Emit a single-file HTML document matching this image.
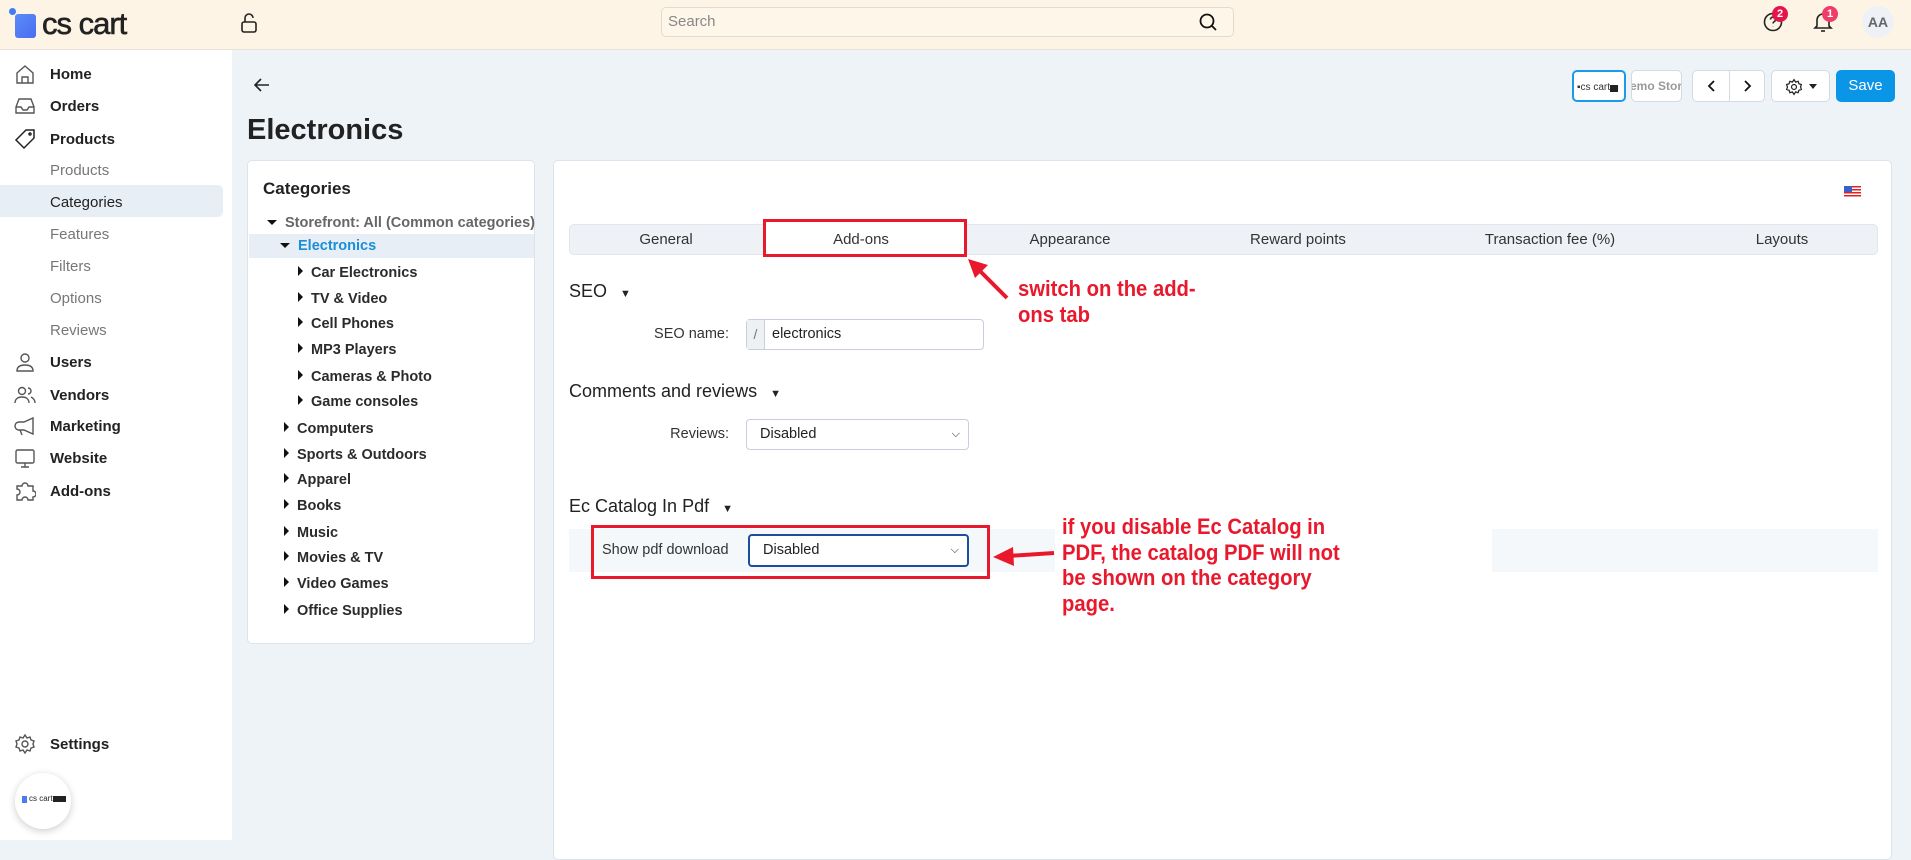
<!DOCTYPE html>
<html><head><meta charset="utf-8"><style>
*{box-sizing:border-box;margin:0;padding:0}
body{width:1911px;height:840px;overflow:hidden;background:#eef3f8;font-family:"Liberation Sans",sans-serif;color:#222;position:relative}
.a{position:absolute;white-space:nowrap}
.hdr{position:absolute;left:0;top:0;width:1911px;height:50px;background:#fef4e6;border-bottom:1px solid #e8e2d8}
.side{position:absolute;left:0;top:50px;width:232px;height:790px;background:#fff}
.nav{position:absolute;left:50px;font-size:15px;font-weight:bold;color:#222;line-height:18px;margin-top:2px}
.sub{position:absolute;left:50px;font-size:15px;color:#777;line-height:18px;margin-top:2px}
.ic{position:absolute;left:14px;width:22px;height:22px}
.panel{position:absolute;background:#fff;border:1px solid #dde3ea;border-radius:5px}
.tr{position:absolute;font-size:14.5px;font-weight:bold;color:#2b2b2b;line-height:18px}
.tri{display:inline-block;width:0;height:0;border-top:5px solid transparent;border-bottom:5px solid transparent;border-left:5px solid #111;margin-right:8px;vertical-align:1px}
.trd{display:inline-block;width:0;height:0;border-left:5px solid transparent;border-right:5px solid transparent;border-top:5px solid #111;margin-right:8px;vertical-align:2px}
.tab{position:absolute;top:224px;font-size:15px;color:#333;line-height:31px;transform:translateX(-50%)}
.h2{position:absolute;left:569px;font-size:18px;color:#222;line-height:22px}
.lbl{position:absolute;font-size:14.5px;color:#333;line-height:18px}
.sel{position:absolute;border:1px solid #ccd;border-radius:4px;background:#fff;font-size:14.5px;line-height:29px;padding-left:13px;color:#222}
.ann{position:absolute;font-weight:bold;color:#e8192c;font-size:22px;line-height:25.5px;transform:scaleX(0.92);transform-origin:left top}
.btn{position:absolute;top:70px;height:32px;background:#fff;border:1px solid #d3dae2;border-radius:5px}
</style></head><body>
<div class="hdr"></div>
<div class="a" style="left:9px;top:8px;width:7px;height:7px;border-radius:50%;background:#3f7df0"></div>
<div class="a" style="left:15px;top:14px;width:21px;height:24px;border-radius:3px;background:linear-gradient(135deg,#5a8cf8,#4a6cf0)"></div>
<div class="a" style="left:42px;top:6px;font-size:31px;color:#222;letter-spacing:-1px;line-height:36px;-webkit-text-stroke:0.6px #222">cs cart</div>
<svg class="a" style="left:239px;top:12px" width="20" height="22" viewBox="0 0 20 22" fill="none" stroke="#222" stroke-width="1.6"><rect x="3" y="10" width="14" height="10" rx="2"/><path d="M6 10V6a4 4 0 0 1 8 0"/></svg>
<div class="a" style="left:661px;top:7px;width:573px;height:30px;border:1px solid #e0dcd4;border-radius:5px;background:#fff6ea"></div>
<div class="a" style="left:668px;top:13px;font-size:15px;color:#888">Search</div>
<svg class="a" style="left:1198px;top:12px" width="20" height="20" viewBox="0 0 20 20" fill="none" stroke="#111" stroke-width="1.8"><circle cx="9" cy="9" r="6.5"/><path d="M14 14l4 4"/></svg>
<svg class="a" style="left:1762px;top:11px" width="22" height="22" viewBox="0 0 22 22" fill="none" stroke="#222" stroke-width="1.6"><circle cx="11" cy="11" r="8.5"/><path d="M8.5 8.5a2.5 2.5 0 1 1 3.5 2.3c-.7.4-1 .9-1 1.7M11 15.5v.3"/></svg>
<div class="a" style="left:1772px;top:6px;width:16px;height:16px;border-radius:50%;background:#e3154b;color:#fff;font-size:11px;font-weight:bold;text-align:center;line-height:16px">2</div>
<svg class="a" style="left:1812px;top:10px" width="22" height="24" viewBox="0 0 22 24" fill="none" stroke="#222" stroke-width="1.6"><path d="M5 16V10a6 6 0 0 1 12 0v6l2 2H3z"/><path d="M9 21h4"/></svg>
<div class="a" style="left:1822px;top:6px;width:16px;height:16px;border-radius:50%;background:#ef3d6b;color:#fff;font-size:11px;font-weight:bold;text-align:center;line-height:16px">1</div>
<div class="a" style="left:1862px;top:6px;width:32px;height:32px;border-radius:50%;background:#eef1f5;color:#666;font-size:14px;font-weight:bold;text-align:center;line-height:32px">AA</div>

<div class="side"></div>
<div class="a" style="left:0;top:185px;width:223px;height:32px;background:#e7eef5;border-radius:0 5px 5px 0"></div>
<svg class="ic" style="top:63px" viewBox="0 0 22 22" fill="none" stroke="#555" stroke-width="1.4"><path d="M3 10L11 3l8 7v10H3z"/><path d="M8 20v-6h6v6"/></svg>
<svg class="ic" style="top:95px" viewBox="0 0 22 22" fill="none" stroke="#555" stroke-width="1.4"><path d="M2 12l3-8h12l3 8v6H2z"/><path d="M2 12h5l2 3h4l2-3h5"/></svg>
<svg class="ic" style="top:128px" viewBox="0 0 22 22" fill="none" stroke="#222" stroke-width="1.5"><path d="M12 2h8v8L10 20 2 12z"/><circle cx="16" cy="6" r="1"/></svg>
<svg class="ic" style="top:351px" viewBox="0 0 22 22" fill="none" stroke="#555" stroke-width="1.4"><circle cx="11" cy="7" r="4"/><path d="M3 20c0-4 3-6 8-6s8 2 8 6z"/></svg>
<svg class="ic" style="top:384px" viewBox="0 0 22 22" fill="none" stroke="#555" stroke-width="1.4"><circle cx="8" cy="7" r="3.5"/><path d="M1 19c0-4 3-6 7-6s7 2 7 6M14 4a3 3 0 0 1 0 6M17 13c2 1 4 3 4 6"/></svg>
<svg class="ic" style="top:415px" viewBox="0 0 22 22" fill="none" stroke="#555" stroke-width="1.4"><path d="M19 3v16l-9-4H5a3 3 0 0 1 0-8h5z"/><path d="M6 15l2 5"/></svg>
<svg class="ic" style="top:447px" viewBox="0 0 22 22" fill="none" stroke="#555" stroke-width="1.4"><rect x="2" y="3" width="18" height="13" rx="1.5"/><path d="M11 16v4M7 20h8"/></svg>
<svg class="ic" style="top:480px" viewBox="0 0 22 22" fill="none" stroke="#555" stroke-width="1.4"><path d="M3 6h5a3 3 0 0 1 6 0h5v5a3 3 0 0 1 0 6v3H14a3 3 0 0 0-6 0H3v-5a3 3 0 0 0 0-6z"/></svg>
<svg class="ic" style="top:733px" viewBox="0 0 22 22" fill="none" stroke="#555" stroke-width="1.4"><circle cx="11" cy="11" r="3"/><path d="M11 2l2 3 3-1 1 3 3 1-1 3 1 3-3 1-1 3-3-1-2 3-2-3-3 1-1-3-3-1 1-3-1-3 3-1 1-3 3 1z"/></svg>
<div class="nav" style="top:64px">Home</div>
<div class="nav" style="top:96px">Orders</div>
<div class="nav" style="top:129px">Products</div>
<div class="sub" style="top:160px">Products</div>
<div class="sub" style="top:192px;color:#222">Categories</div>
<div class="sub" style="top:224px">Features</div>
<div class="sub" style="top:256px">Filters</div>
<div class="sub" style="top:288px">Options</div>
<div class="sub" style="top:320px">Reviews</div>
<div class="nav" style="top:352px">Users</div>
<div class="nav" style="top:385px">Vendors</div>
<div class="nav" style="top:416px">Marketing</div>
<div class="nav" style="top:448px">Website</div>
<div class="nav" style="top:481px">Add-ons</div>
<div class="nav" style="top:734px">Settings</div>
<div class="a" style="left:15px;top:773px;width:56px;height:56px;border-radius:50%;background:#fff;box-shadow:0 2px 8px rgba(0,0,0,.2)"></div>
<div class="a" style="left:22px;top:796px;width:5px;height:7px;background:#4a7cf0"></div>
<div class="a" style="left:29px;top:794px;font-size:8px;color:#222">cs cart</div>
<div class="a" style="left:53px;top:796px;width:13px;height:6px;background:#222"></div>

<svg class="a" style="left:253px;top:77px" width="18" height="16" viewBox="0 0 18 16" fill="none" stroke="#222" stroke-width="1.6"><path d="M16 8H2M8 2L2 8l6 6"/></svg>
<div class="a" style="left:247px;top:112px;font-size:29px;font-weight:bold;color:#222;line-height:36px">Electronics</div>

<div class="btn" style="left:1572px;width:54px;border:2px solid #1a9be8"><div class="a" style="left:3px;top:10px;font-size:10px;color:#333">▪cs cart<span style="background:#222;color:#222;font-size:7px">■■</span></div></div>
<div class="btn" style="left:1631px;width:51px;overflow:hidden"><div class="a" style="left:-2px;top:8px;font-size:12px;font-weight:bold;color:#999">emo Stor</div></div>
<div class="btn" style="left:1692px;width:73px"><div class="a" style="left:36px;top:0;width:1px;height:30px;background:#d3dae2"></div>
<svg class="a" style="left:12px;top:8px" width="14" height="14" viewBox="0 0 14 14" fill="none" stroke="#111" stroke-width="1.8"><path d="M9 2L4 7l5 5"/></svg>
<svg class="a" style="left:47px;top:8px" width="14" height="14" viewBox="0 0 14 14" fill="none" stroke="#111" stroke-width="1.8"><path d="M5 2l5 5-5 5"/></svg></div>
<div class="btn" style="left:1771px;width:59px">
<svg class="a" style="left:13px;top:7px" width="18" height="18" viewBox="0 0 22 22" fill="none" stroke="#222" stroke-width="1.5"><circle cx="11" cy="11" r="3"/><path d="M11 2l2 3 3-1 1 3 3 1-1 3 1 3-3 1-1 3-3-1-2 3-2-3-3 1-1-3-3-1 1-3-1-3 3-1 1-3 3 1z"/></svg>
<div class="a" style="left:37px;top:13px;border-left:4px solid transparent;border-right:4px solid transparent;border-top:5px solid #222"></div></div>
<div class="a" style="left:1836px;top:70px;width:59px;height:32px;background:#0b95e6;border-radius:5px;color:#fff;font-size:15px;text-align:center;line-height:32px">Save</div>

<div class="panel" style="left:247px;top:160px;width:288px;height:484px"></div>
<div class="a" style="left:263px;top:179px;font-size:17px;font-weight:bold;color:#222">Categories</div>
<div class="tr" style="left:267px;top:214px;color:#666"><span class="trd"></span>Storefront: All (Common categories)</div>
<div class="a" style="left:249px;top:234px;width:285px;height:24px;background:#e7eef5"></div>
<div class="tr" style="left:280px;top:237px;color:#1a8fd8"><span class="trd"></span>Electronics</div>
<div class="tr" style="left:298px;top:264px"><span class="tri"></span>Car Electronics</div>
<div class="tr" style="left:298px;top:290px"><span class="tri"></span>TV &amp; Video</div>
<div class="tr" style="left:298px;top:315px"><span class="tri"></span>Cell Phones</div>
<div class="tr" style="left:298px;top:341px"><span class="tri"></span>MP3 Players</div>
<div class="tr" style="left:298px;top:368px"><span class="tri"></span>Cameras &amp; Photo</div>
<div class="tr" style="left:298px;top:393px"><span class="tri"></span>Game consoles</div>
<div class="tr" style="left:284px;top:420px"><span class="tri"></span>Computers</div>
<div class="tr" style="left:284px;top:446px"><span class="tri"></span>Sports &amp; Outdoors</div>
<div class="tr" style="left:284px;top:471px"><span class="tri"></span>Apparel</div>
<div class="tr" style="left:284px;top:497px"><span class="tri"></span>Books</div>
<div class="tr" style="left:284px;top:524px"><span class="tri"></span>Music</div>
<div class="tr" style="left:284px;top:549px"><span class="tri"></span>Movies &amp; TV</div>
<div class="tr" style="left:284px;top:575px"><span class="tri"></span>Video Games</div>
<div class="tr" style="left:284px;top:602px"><span class="tri"></span>Office Supplies</div>

<div class="panel" style="left:553px;top:160px;width:1339px;height:700px"></div>
<div class="a" style="left:1844px;top:186px;width:17px;height:11px;background:repeating-linear-gradient(#d22 0 1.5px,#fff 1.5px 3px)"><div style="width:8px;height:6px;background:#3b5fc8"></div></div>
<div class="a" style="left:569px;top:224px;width:1309px;height:31px;background:#eef2f6;border:1px solid #e1e6ec;border-radius:5px"></div>
<div class="a" style="left:766px;top:222px;width:198px;height:33px;background:#fff"></div>
<div class="tab" style="left:666px">General</div>
<div class="tab" style="left:861px">Add-ons</div>
<div class="tab" style="left:1070px">Appearance</div>
<div class="tab" style="left:1298px">Reward points</div>
<div class="tab" style="left:1550px">Transaction fee (%)</div>
<div class="tab" style="left:1782px">Layouts</div>
<div class="a" style="left:763px;top:219px;width:204px;height:38px;border:3.5px solid #e8192c"></div>

<div class="h2" style="top:280px">SEO <span style="font-size:11px;margin-left:8px">▼</span></div>
<div class="lbl" style="left:650px;top:325px;width:79px;text-align:right">SEO name:</div>
<div class="a" style="left:746px;top:319px;width:238px;height:31px;border:1px solid #ccd;border-radius:4px;background:#fff"><div style="position:absolute;left:0;top:0;width:18px;height:29px;background:#eef1f4;border-right:1px solid #ccd;color:#777;text-align:center;line-height:29px;font-size:14px">/</div><div style="position:absolute;left:25px;top:0;line-height:29px;font-size:14.5px">electronics</div></div>
<div class="h2" style="top:380px">Comments and reviews <span style="font-size:11px;margin-left:8px">▼</span></div>
<div class="lbl" style="left:650px;top:425px;width:79px;text-align:right">Reviews:</div>
<div class="sel" style="left:746px;top:419px;width:223px;height:31px">Disabled<span style="position:absolute;right:8px;font-size:11px">⌵</span></div>
<div class="h2" style="top:495px">Ec Catalog In Pdf <span style="font-size:11px;margin-left:8px">▼</span></div>
<div class="a" style="left:569px;top:529px;width:1309px;height:43px;background:#f5f8fa"></div>
<div class="lbl" style="left:602px;top:541px">Show pdf download</div>
<div class="sel" style="left:748px;top:534px;width:221px;height:33px;border:2px solid #1b4f9c">Disabled<span style="position:absolute;right:8px;font-size:11px">⌵</span></div>
<div class="a" style="left:591px;top:525px;width:399px;height:54px;border:3.5px solid #e8192c"></div>

<svg class="a" style="left:960px;top:250px" width="60" height="60" viewBox="0 0 60 60"><path d="M47 48L17 18" stroke="#e8192c" stroke-width="4"/><path d="M8 9l20 6-13 13z" fill="#e8192c"/></svg>
<div class="a" style="left:1016px;top:275px;width:210px;height:52px;background:#fff"></div>
<div class="ann" style="left:1018px;top:276px">switch on the add-<br>ons tab</div>
<svg class="a" style="left:990px;top:540px" width="70" height="30" viewBox="0 0 70 30"><path d="M64 13L18 16" stroke="#e8192c" stroke-width="4"/><path d="M3 17l20-10 1 19z" fill="#e8192c"/></svg>
<div class="a" style="left:1055px;top:512px;width:437px;height:105px;background:#fff"></div>
<div class="ann" style="left:1062px;top:514px">if you disable Ec Catalog in<br>PDF, the catalog PDF will not<br>be shown on the category<br>page.</div>
</body></html>
